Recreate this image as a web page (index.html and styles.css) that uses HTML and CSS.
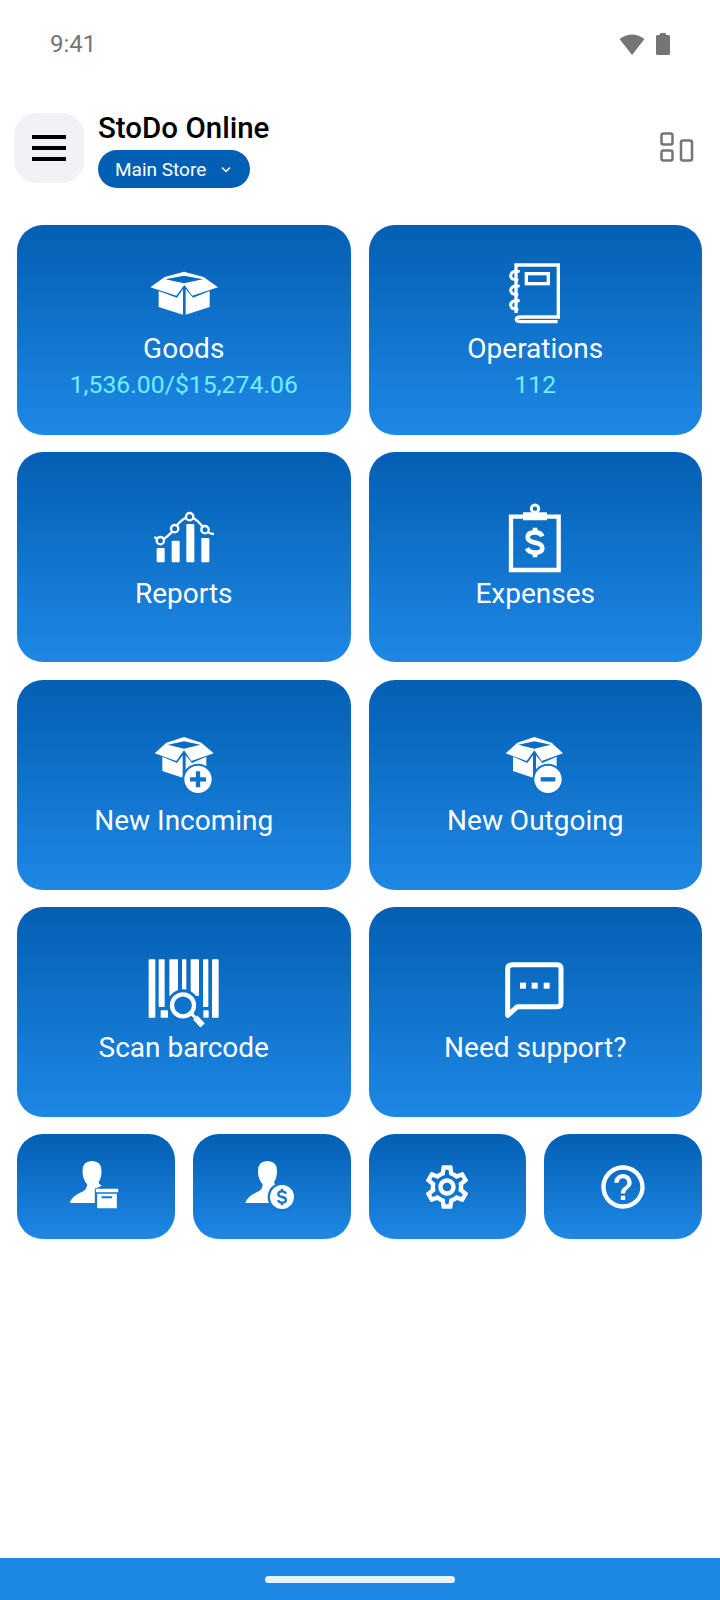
FILE: index.html
```html
<!DOCTYPE html>
<html lang="en">

<head>
    <meta charset="UTF-8">
    <meta name="viewport" content="width=device-width, initial-scale=1.0">
    <title>StoDo Online</title>
    <link rel="stylesheet" href="styles.css">
</head>

<body>

    <div class="status-bar">
        <span class="clock">9:41</span>
        <div class="status-icons">
            <svg class="wifi" width="26" height="22" viewBox="0 0 26 22">
                <path d="M0.5 6 Q13 -3 25.5 6 L13 22 Z" fill="#757575" />
            </svg>
            <svg class="battery" width="14" height="22" viewBox="0 0 14 22">
                <path d="M4 2 V1 Q4 0 5 0 H9 Q10 0 10 1 V2 H12.5 Q14 2 14 3.500 V20.500 Q14 22 12.500 22 H1.500 Q0 22 0 20.500 V3.500 Q0 2 1.500 2 Z" fill="#757575" />
            </svg>
        </div>
    </div>

    <header class="app-header">
        <button class="menu-btn">
            <span></span>
            <span></span>
            <span></span>
        </button>
        <div class="app-title">
            <h1>StoDo Online</h1>
            <div class="store-pill">
                <span>Main Store</span>
                <svg width="10" height="7" viewBox="0 0 10 7">
                    <path d="M1 1.500 L5 5.500 L9 1.500" fill="none" stroke="#fff" stroke-width="1.500" />
                </svg>
            </div>
        </div>
        <svg class="layout-icon" width="34" height="30" viewBox="0 0 34 30">
            <rect x="1.500" y="1.500" width="11" height="11" rx="2" />
            <rect x="1.500" y="18.500" width="11" height="10" rx="2" />
            <rect x="21" y="8.500" width="11" height="20" rx="2" />
        </svg>
    </header>

    <main class="tiles">

        <div class="tile">
            <svg class="tile-icon" viewBox="133 34 240 192">
                <path fill-rule="evenodd" fill="#fff" d="M152 113 L195 82 L253 66 L312 82 L355 113 L278 138 L254 106 L230 138 Z M197 89 L253 101 L310 89 L253 78 Z" />
                <path fill="#fff" d="M177 124 L232 144 L250 118 V195 L177 172 Z M330 124 L280 144 L258 118 V195 L330 172 Z" />
            </svg>
            <div class="tile-label">Goods</div>
            <div class="tile-value">1,536.00/$15,274.06</div>
        </div>

        <div class="tile">
            <svg class="tile-icon" viewBox="108 34 240 192">
                <g fill="none" stroke="#fff" stroke-width="10">
                    <path d="M171 190 V46 H298 V202 H186 Q172 202 172 209 Q172 216 186 216 H296" />
                    <rect x="202" y="72" width="66" height="30" />
                    <path stroke-width="9" d="M182 66 Q170 62 160 68 Q150 78 160 88 L178 92 M182 110 Q170 106 160 112 Q150 122 160 132 L178 136 M182 154 Q170 150 160 156 Q150 166 160 176 L178 180" />
                </g>
            </svg>
            <div class="tile-label">Operations</div>
            <div class="tile-value">112</div>
        </div>

        <div class="tile">
            <svg class="tile-icon" viewBox="43 34 240 192">
                <g fill="#fff">
                    <rect x="81" y="160" width="24" height="43" rx="3" />
                    <rect x="126" y="138" width="24" height="65" rx="3" />
                    <rect x="170" y="88" width="24" height="115" rx="3" />
                    <rect x="215" y="130" width="24" height="73" rx="3" />
                </g>
                <path d="M74 127 L92 138 Q112 130 135 102 Q155 70 180 66 Q200 70 226 105 Q236 118 253 118" fill="none" stroke="#fff" stroke-width="7" />
                <g fill="#0c6cc3" stroke="#fff" stroke-width="7">
                    <circle cx="92" cy="138" r="11" />
                    <circle cx="135" cy="102" r="11" />
                    <circle cx="180" cy="66" r="11" />
                    <circle cx="226" cy="105" r="11" />
                </g>
            </svg>
            <div class="tile-label">Reports</div>
        </div>

        <div class="tile">
            <svg class="tile-icon" viewBox="18 33 240 192">
                <path d="M102 65 H66 V225 H209 V65 H174" fill="none" stroke="#fff" stroke-width="13" />
                <rect x="102" y="52" width="72" height="24" rx="2" fill="#fff" />
                <circle cx="138" cy="41" r="11" fill="none" stroke="#fff" stroke-width="9" />
                <g fill="none" stroke="#fff" stroke-width="14">
                    <path d="M160 124 Q155 112 138 112 Q116 112 116 127 Q116 139 138 143 Q160 147 160 160 Q160 173 138 173 Q120 173 114 160" />
                    <path d="M138 98 V112 M138 173 V187" />
                </g>
            </svg>
            <div class="tile-label">Expenses</div>
        </div>

        <div class="tile">
            <svg class="tile-icon" viewBox="13 26 240 192">
                <path fill-rule="evenodd" fill="#fff" d="M45 87 L80 55 L133 38 L185 55 L222 87 L155 110 L133 78 L110 110 Z M85 61 L133 73 L182 61 L133 51 Z" />
                <path fill="#fff" d="M68 97 L112 116 L129 93 V160 L68 140 Z M200 97 L157 116 L138 93 V160 H200 Z" />
                <circle cx="175" cy="165" r="47" fill="#1073cb" />
                <circle cx="175" cy="165" r="41" fill="#fff" />
                <path d="M175 141 V189 M151 165 H199" fill="none" stroke="#1073cb" stroke-width="13" />
            </svg>
            <div class="tile-label">New Incoming</div>
        </div>

        <div class="tile">
            <svg class="tile-icon" viewBox="18 26 240 192">
                <path fill-rule="evenodd" fill="#fff" d="M50 87 L85 55 L136 38 L188 55 L222 87 L158 110 L136 78 L113 110 Z M88 61 L136 73 L185 61 L136 51 Z" />
                <path fill="#fff" d="M72 97 L115 116 L132 93 V160 L72 140 Z M203 97 L160 116 L141 93 V160 H203 Z" />
                <circle cx="177" cy="165" r="47" fill="#1073cb" />
                <circle cx="177" cy="165" r="41" fill="#fff" />
                <path d="M155 165 H199" fill="none" stroke="#1073cb" stroke-width="13" />
            </svg>
            <div class="tile-label">New Outgoing</div>
        </div>

        <div class="tile">
            <svg class="tile-icon" viewBox="28 39 240 192">
                <g fill="#fff">
                    <rect x="42" y="37" width="20" height="175" rx="2" />
                    <rect x="72" y="37" width="18" height="143" rx="2" />
                    <rect x="104" y="37" width="26" height="110" rx="2" />
                    <rect x="142" y="37" width="13" height="100" rx="2" />
                    <rect x="168" y="37" width="25" height="110" rx="2" />
                    <rect x="205" y="37" width="16" height="143" rx="2" />
                    <rect x="232" y="37" width="20" height="175" rx="2" />
                    <rect x="78" y="190" width="22" height="22" rx="2" />
                    <rect x="206" y="190" width="16" height="22" rx="2" />
                </g>
                <circle cx="145" cy="175" r="48" fill="#0f71c9" />
                <circle cx="145" cy="175" r="33" fill="none" stroke="#fff" stroke-width="13" />
                <path d="M170 200 L182 212" stroke="#fff" stroke-width="9" />
                <path d="M182 212 L204 235" stroke="#fff" stroke-width="18" />
            </svg>
            <div class="tile-label">Scan barcode</div>
        </div>

        <div class="tile">
            <svg class="tile-icon" viewBox="18 32 240 192">
                <path d="M72 46 H205 Q216 46 216 58 V160 Q216 172 205 172 H85 L56 198 V58 Q56 46 72 46 Z" fill="none" stroke="#fff" stroke-width="15" stroke-linejoin="round" />
                <g fill="#fff">
                    <rect x="93" y="100" width="18" height="18" />
                    <rect x="128" y="100" width="18" height="18" />
                    <rect x="164" y="100" width="18" height="18" />
                </g>
            </svg>
            <div class="tile-label">Need support?</div>
        </div>

    </main>

    <div class="shortcuts">

        <div class="shortcut">
            <svg class="shortcut-icon" viewBox="192.500 102 192 192">
                <path fill="#fff" d="M210 246 Q215 226 250 211 Q262 204 262 190 Q248 175 248 150 Q248 120 276 120 Q305 120 305 150 Q305 172 296 184 Q296 190 306 194 L285 203 V246 Z" />
                <rect x="288" y="203" width="67" height="11" rx="1" fill="#fff" />
                <path fill-rule="evenodd" fill="#fff" d="M292 218 H351 V262 H292 Z M305 226 V232 H337 V226 Z" />
            </svg>
        </div>

        <div class="shortcut">
            <svg class="shortcut-icon" viewBox="719 102 192 192">
                <path fill="#fff" d="M735 246 Q740 226 775 211 Q787 204 787 190 Q773 175 773 150 Q773 120 801 120 Q830 120 830 150 Q830 172 821 184 Q821 190 831 194 L810 203 V246 Z" />
                <circle cx="845" cy="228" r="43" fill="#1378d1" />
                <circle cx="845" cy="228" r="36" fill="#fff" />
                <g fill="none" stroke="#1378d1" stroke-width="7">
                    <path d="M857 218 Q854 211 845 211 Q834 211 834 219 Q834 226 845 228 Q857 230 857 237 Q857 245 845 245 Q836 245 833 238" />
                    <path d="M845 203 V211 M845 245 V253" />
                </g>
            </svg>
        </div>

        <div class="shortcut">
            <svg class="shortcut-material" viewBox="0 0 24 24">
                <path fill="#fff" d="M19.430 12.980c.04-.32.07-.64.07-.98 0-.34-.03-.66-.07-.98l2.110-1.650c.19-.15.24-.42.12-.64l-2-3.460c-.09-.16-.26-.25-.44-.25-.06 0-.12.01-.17.03l-2.490 1c-.52-.4-1.080-.73-1.690-.98l-.38-2.650C14.460 2.180 14.250 2 14 2h-4c-.25 0-.46.18-.49.42l-.38 2.650c-.61.25-1.170.59-1.690.98l-2.490-1c-.06-.02-.12-.03-.18-.03-.17 0-.34.09-.43.25l-2 3.460c-.13.22-.07.49.12.64l2.110 1.650c-.04.32-.07.65-.07.98 0 .33.03.66.07.98l-2.110 1.650c-.19.15-.24.42-.12.64l2 3.460c.09.16.26.25.44.25.06 0 .12-.01.17-.03l2.490-1c.52.4 1.080.73 1.690.98l.38 2.650c.03.24.24.42.49.42h4c.25 0 .46-.18.49-.42l.38-2.650c.61-.25 1.170-.59 1.690-.98l2.490 1c.06.02.12.03.18.03.17 0 .34-.09.43-.25l2-3.460c.12-.22.07-.49-.12-.64l-2.110-1.650zm-1.980-1.710c.04.31.05.52.05.73 0 .21-.02.43-.05.73l-.14 1.130.89.7 1.080.84-.7 1.210-1.270-.51-1.040-.42-.9.68c-.43.32-.84.56-1.250.73l-1.060.43-.16 1.130-.2 1.350h-1.400l-.19-1.350-.16-1.130-1.060-.43c-.43-.18-.83-.41-1.230-.71l-.91-.7-1.060.43-1.270.51-.7-1.210 1.080-.84.89-.7-.14-1.130c-.03-.31-.05-.54-.05-.74s.02-.43.05-.73l.14-1.130-.89-.7-1.080-.84.7-1.210 1.270.51 1.040.42.9-.68c.43-.32.84-.56 1.250-.73l1.060-.43.16-1.130.2-1.350h1.390l.19 1.350.16 1.130 1.060.43c.43.18.83.41 1.230.71l.91.7 1.060-.43 1.270-.51.7 1.210-1.070.85-.89.7.14 1.130zM12 8c-2.210 0-4 1.790-4 4s1.790 4 4 4 4-1.790 4-4-1.790-4-4-4zm0 6c-1.100 0-2-.9-2-2s.9-2 2-2 2 .9 2 2-.9 2-2 2z" />
            </svg>
        </div>

        <div class="shortcut">
            <svg class="shortcut-material" viewBox="0 0 24 24">
                <path fill="#fff" d="M11 18h2v-2h-2v2zm1-16C6.480 2 2 6.480 2 12s4.480 10 10 10 10-4.480 10-10S17.520 2 12 2zm0 18c-4.410 0-8-3.590-8-8s3.590-8 8-8 8 3.590 8 8-3.590 8-8 8zm0-14c-2.210 0-4 1.790-4 4h2c0-1.100.9-2 2-2s2 .9 2 2c0 2-3 1.750-3 5h2c0-2.250 3-2.500 3-5 0-2.210-1.790-4-4-4z" />
            </svg>
        </div>

    </div>

    <div class="nav-bar">
        <div class="home-pill"></div>
    </div>

</body>

</html>
```

FILE: styles.css
```css
* {
    box-sizing: border-box;
}

body {
    width: 720px;
    height: 1600px;
    margin: 0;
    display: flex;
    flex-direction: column;
    background-color: white;
    font-family: Roboto, "Liberation Sans", sans-serif;
    overflow: hidden;
}

.status-bar {
    height: 113px;
    padding: 30px 50px 0 50px;
    display: flex;
    justify-content: space-between;
    align-items: flex-start;
}

.clock {
    font-size: 24px;
    line-height: 28px;
    color: #757575;
}

.status-icons {
    display: flex;
    gap: 11px;
    padding-top: 3px;
}

.app-header {
    height: 76px;
    padding: 0 26px 0 14px;
    display: flex;
    align-items: flex-start;
    gap: 14px;
}

.menu-btn {
    width: 70px;
    height: 70px;
    padding: 0;
    border: none;
    border-radius: 22px;
    background-color: #f0f2f5;
    display: flex;
    flex-direction: column;
    align-items: center;
    justify-content: center;
    gap: 7.500px;
}

.menu-btn span {
    width: 34px;
    height: 3.500px;
    background-color: black;
}

.app-title {
    flex-grow: 1;
}

h1 {
    margin: 0;
    font-size: 29.500px;
    line-height: 30px;
    font-weight: 500;
    color: black;
}

.store-pill {
    width: 152px;
    height: 38px;
    margin-top: 7px;
    padding-left: 17px;
    display: flex;
    align-items: center;
    gap: 15px;
    border-radius: 19px;
    background-color: #035fb3;
    color: white;
    font-size: 19px;
}

.layout-icon {
    margin-top: 19px;
    fill: none;
    stroke: #757575;
    stroke-width: 2.500px;
}

.tiles {
    margin-top: 36px;
    padding: 0 18px 0 17px;
    display: grid;
    grid-template-columns: 1fr 1fr;
    column-gap: 18px;
    row-gap: 17.250px;
}

.tile {
    height: 210px;
    padding-top: 3px;
    border-radius: 26px;
    background: linear-gradient(#035fb3, #1e88e5);
    display: flex;
    flex-direction: column;
    align-items: center;
    justify-content: center;
    color: white;
}

.tile-icon {
    width: 80px;
    height: 64px;
    overflow: visible;
}

.tile-label {
    margin-top: 6px;
    font-size: 28px;
    line-height: 36px;
}

.tile-value {
    font-size: 24.800px;
    line-height: 35px;
    color: #6cf0ff;
}

.shortcuts {
    margin-top: 17.250px;
    padding: 0 18px 0 17px;
    display: grid;
    grid-template-columns: repeat(4, 1fr);
    column-gap: 18px;
}

.shortcut {
    height: 105px;
    border-radius: 26px;
    background: linear-gradient(#035fb3, #1e88e5);
    display: flex;
    align-items: center;
    justify-content: center;
}

.shortcut-icon {
    width: 64px;
    height: 64px;
    overflow: visible;
}

.shortcut-material {
    width: 52px;
    height: 52px;
}

.nav-bar {
    height: 42px;
    margin-top: auto;
    padding-top: 18px;
    background-color: #1e88e5;
    display: flex;
    justify-content: center;
}

.home-pill {
    width: 190px;
    height: 7px;
    border-radius: 4px;
    background-color: #e8f4fd;
}
```
